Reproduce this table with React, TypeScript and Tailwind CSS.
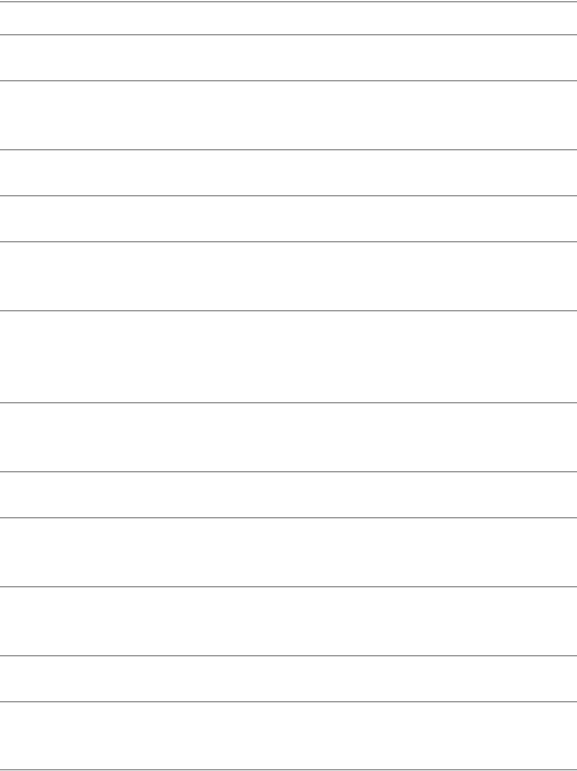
import React from "react";

const rowClasses = [
  "h-[31px]",
  "h-[44px]",
  "h-[67px]",
  "h-[44px]",
  "h-[44px]",
  "h-[67px]",
  "h-[90px]",
  "h-[67px]",
  "h-[44px]",
  "h-[67px]",
  "h-[67px]",
  "h-[44px]",
  "h-[66px]",
];

function Rule() {
  return <div className="h-[2px] w-full border-t border-[#9a9a9a] bg-[#d6d6d6]" />;
}

export default function App() {
  return (
    <div className="flex h-[771px] w-full flex-col bg-white pt-px font-['Liberation_Sans',sans-serif]">
      <Rule />
      {rowClasses.map((cls, i) => (
        <React.Fragment key={i}>
          <div className={cls} />
          <Rule />
        </React.Fragment>
      ))}
    </div>
  );
}
